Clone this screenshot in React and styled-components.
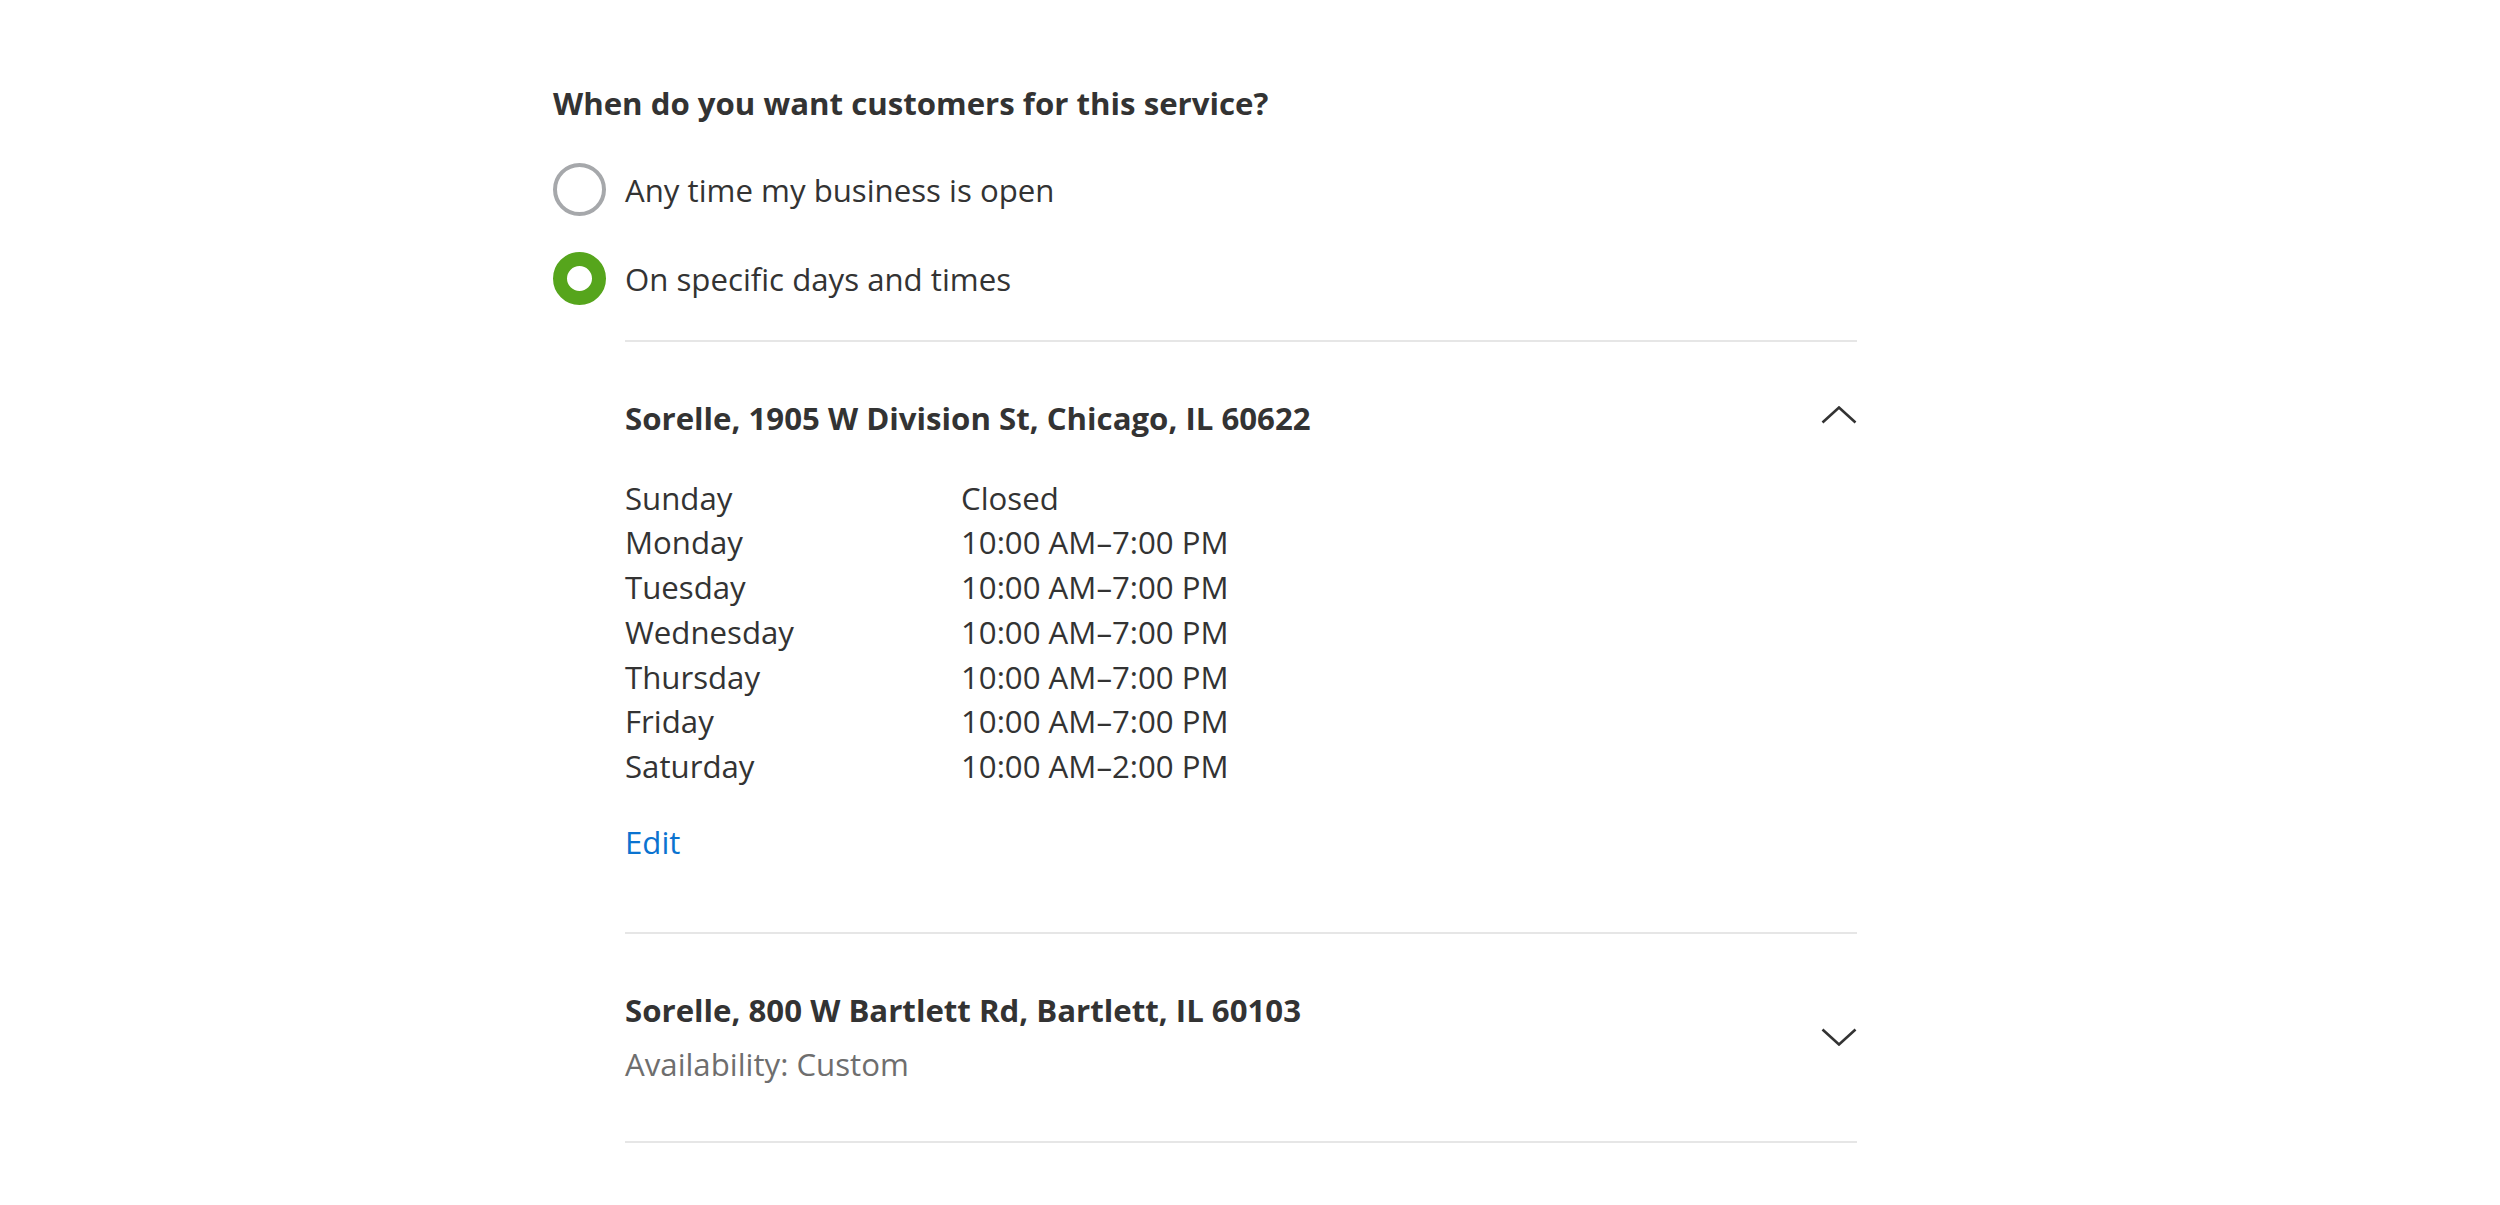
import React from "react"
import styled, { createGlobalStyle } from "styled-components"

const GlobalStyle = createGlobalStyle`
  html, body {
    margin: 0;
    padding: 0;
    background: #fff;
  }
  body {
    font-family: "Open Sans", "Noto Sans", sans-serif;
    color: #333;
  }
`

const hours = [
  ["Sunday", "Closed"],
  ["Monday", "10:00 AM–7:00 PM"],
  ["Tuesday", "10:00 AM–7:00 PM"],
  ["Wednesday", "10:00 AM–7:00 PM"],
  ["Thursday", "10:00 AM–7:00 PM"],
  ["Friday", "10:00 AM–7:00 PM"],
  ["Saturday", "10:00 AM–2:00 PM"],
]

function Chevron({ up }) {
  return (
    <ChevronSvg viewBox="0 0 36 18" $up={up}>
      <polyline points="1.5,16.5 18,1.5 34.5,16.5" />
    </ChevronSvg>
  )
}

export default function App() {
  return (
    <Page>
      <GlobalStyle />
      <Heading>When do you want customers for this service?</Heading>
      <RadioGroup>
        <Option>
          <Radio />
          <span>Any time my business is open</span>
        </Option>
        <Option>
          <Radio $checked />
          <span>On specific days and times</span>
        </Option>
      </RadioGroup>

      <Locations>
        <Location $open>
          <LocationHeader>
            <div>
              <LocationTitle>Sorelle, 1905 W Division St, Chicago, IL 60622</LocationTitle>
            </div>
            <Chevron up />
          </LocationHeader>
          <Hours>
            {hours.map(([day, time]) => (
              <React.Fragment key={day}>
                <span>{day}</span>
                <span>{time}</span>
              </React.Fragment>
            ))}
          </Hours>
          <EditLink href="#">Edit</EditLink>
        </Location>
        <Location>
          <LocationHeader>
            <div>
              <LocationTitle>Sorelle, 800 W Bartlett Rd, Bartlett, IL 60103</LocationTitle>
              <Availability>Availability: Custom</Availability>
            </div>
            <Chevron />
          </LocationHeader>
        </Location>
      </Locations>
    </Page>
  )
}

const Page = styled.div`
  padding: 81px 0 40px 553px;
  font-size: 31.2px;
`

const Heading = styled.h2`
  margin: 0;
  font-size: 31.2px;
  line-height: 44px;
  font-weight: 700;
  color: #333;
`

const RadioGroup = styled.div`
  display: flex;
  flex-direction: column;
  gap: 36px;
  margin-top: 38px;
`

const Option = styled.label`
  display: flex;
  align-items: center;
  gap: 19px;
  height: 53px;
  line-height: 44px;
  cursor: pointer;
`

const Radio = styled.span`
  box-sizing: border-box;
  width: 53px;
  height: 53px;
  border-radius: 50%;
  flex-shrink: 0;
  border: ${(p) => (p.$checked ? "14px solid #56a51c" : "4px solid #a6a8ab")};
  background: #fff;
`

const Locations = styled.div`
  margin: 35px 0 0 72px;
  width: 1232px;
  border-bottom: 2px solid #e6e6e6;
`

const Location = styled.div`
  border-top: 2px solid #e6e6e6;
  padding: 54px 0 ${(p) => (p.$open ? "68px" : "55px")};
`

const LocationHeader = styled.div`
  display: flex;
  align-items: center;
  justify-content: space-between;
`

const LocationTitle = styled.div`
  font-weight: 700;
  line-height: 44px;
`

const Availability = styled.div`
  margin-top: 10px;
  line-height: 44px;
  color: #6e6e6e;
`

const ChevronSvg = styled.svg`
  width: 36px;
  height: 18px;
  flex-shrink: 0;
  transform: ${(p) => (p.$up ? "translateY(-3px)" : "rotate(180deg)")};
  polyline {
    fill: none;
    stroke: #333;
    stroke-width: 2.6;
  }
`

const Hours = styled.div`
  display: grid;
  grid-template-columns: 336px auto;
  line-height: 44.7px;
  margin-top: 35.7px;
`

const EditLink = styled.a`
  display: inline-block;
  margin-top: 31.7px;
  line-height: 44px;
  color: #0a73d0;
  text-decoration: none;
`
